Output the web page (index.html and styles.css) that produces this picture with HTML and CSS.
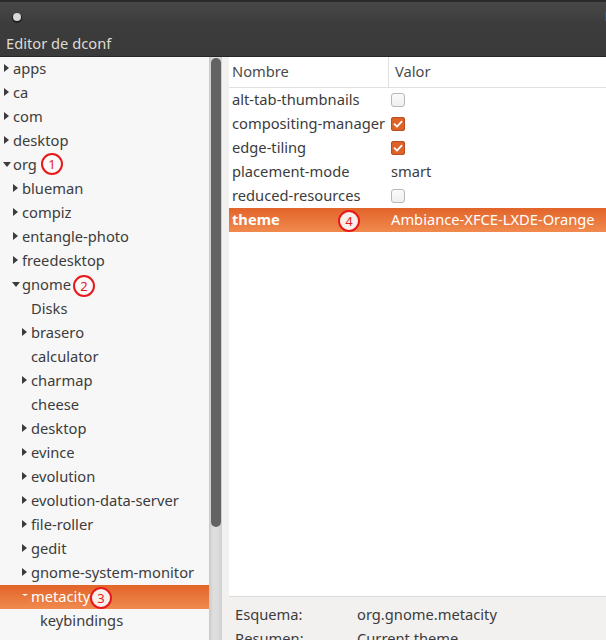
FILE: index.html
```
<!DOCTYPE html>
<html>
<head>
<meta charset="utf-8">
<link rel="stylesheet" href="styles.css">
</head>
<body>
<div class="window">
  <div class="titlebar">
    <div class="tb-top">
      <span class="tb-dot"></span>
      <span class="tb-cut">E</span>
    </div>
    <div class="tb-title">Editor de dconf</div>
  </div>
  <div class="main">
    <div class="tree">
      <div class="row l0"><span class="tri r"></span>apps</div>
      <div class="row l0"><span class="tri r"></span>ca</div>
      <div class="row l0"><span class="tri r"></span>com</div>
      <div class="row l0"><span class="tri r"></span>desktop</div>
      <div class="row l0"><span class="tri d"></span>org<span class="mark m1">1</span></div>
      <div class="row l1"><span class="tri r"></span>blueman</div>
      <div class="row l1"><span class="tri r"></span>compiz</div>
      <div class="row l1"><span class="tri r"></span>entangle-photo</div>
      <div class="row l1"><span class="tri r"></span>freedesktop</div>
      <div class="row l1"><span class="tri d"></span>gnome<span class="mark m2">2</span></div>
      <div class="row l2"><span class="tri n"></span>Disks</div>
      <div class="row l2"><span class="tri r"></span>brasero</div>
      <div class="row l2"><span class="tri n"></span>calculator</div>
      <div class="row l2"><span class="tri r"></span>charmap</div>
      <div class="row l2"><span class="tri n"></span>cheese</div>
      <div class="row l2"><span class="tri r"></span>desktop</div>
      <div class="row l2"><span class="tri r"></span>evince</div>
      <div class="row l2"><span class="tri r"></span>evolution</div>
      <div class="row l2"><span class="tri r"></span>evolution-data-server</div>
      <div class="row l2"><span class="tri r"></span>file-roller</div>
      <div class="row l2"><span class="tri r"></span>gedit</div>
      <div class="row l2"><span class="tri r"></span>gnome-system-monitor</div>
      <div class="row l2 sel"><span class="tri d small"></span>metacity<span class="mark m3">3</span></div>
      <div class="row l3"><span class="tri n"></span>keybindings</div>
    </div>
    <div class="scrollbar"><div class="thumb"></div></div>
    <div class="pane-sep"></div>
    <div class="right">
      <div class="list">
        <div class="head">
          <div class="hcell hname">Nombre</div>
          <div class="hcell hval">Valor</div>
        </div>
        <div class="krow"><div class="kname">alt-tab-thumbnails</div><div class="kval"><span class="cb"></span></div></div>
        <div class="krow"><div class="kname">compositing-manager</div><div class="kval"><span class="cb on"><svg viewBox="0 0 14 14" width="14" height="14"><path d="M3.5 7.2 L6 9.6 L10.6 4.6" fill="none" stroke="#fff" stroke-width="1.8" stroke-linecap="round" stroke-linejoin="round"/></svg></span></div></div>
        <div class="krow"><div class="kname">edge-tiling</div><div class="kval"><span class="cb on"><svg viewBox="0 0 14 14" width="14" height="14"><path d="M3.5 7.2 L6 9.6 L10.6 4.6" fill="none" stroke="#fff" stroke-width="1.8" stroke-linecap="round" stroke-linejoin="round"/></svg></span></div></div>
        <div class="krow"><div class="kname">placement-mode</div><div class="kval">smart</div></div>
        <div class="krow"><div class="kname">reduced-resources</div><div class="kval"><span class="cb"></span></div></div>
        <div class="krow ksel"><div class="kname bold">theme</div><div class="kval">Ambiance-XFCE-LXDE-Orange</div><span class="mark m4">4</span></div>
      </div>
      <div class="details">
        <div class="drow"><span class="dlabel">Esquema:</span><span>org.gnome.metacity</span></div>
        <div class="drow"><span class="dlabel">Resumen:</span><span>Current theme</span></div>
      </div>
    </div>
  </div>
</div>
</body>
</html>
```
FILE: styles.css
```
html, body {
  margin: 0;
  padding: 0;
}
body {
  width: 606px;
  height: 640px;
  overflow: hidden;
  background: #f2f1f0;
  font-family: "Noto Sans", "Open Sans", sans-serif;
  font-size: 14.7px;
  color: #3c3c3c;
}
.window {
  display: flex;
  flex-direction: column;
  height: 640px;
  border-top: 2px solid #2c2a2c;
}
.titlebar {
  height: 54px;
  background: linear-gradient(#484848, #3c3c3c 40%, #3a3a3a);
  border-bottom: 1px solid #262626;
  display: flex;
  flex-direction: column;
}
.tb-top {
  height: 28px;
  display: flex;
  align-items: center;
  justify-content: space-between;
}
.tb-dot {
  width: 8px;
  height: 8px;
  border-radius: 50%;
  background: #d8d8d8;
  box-shadow: 0 1px 0 1px #1e1e1e;
  margin-left: 13px;
  margin-top: 1px;
}
.tb-cut {
  color: #dfdbd2;
  font-size: 13px;
  margin-right: -6px;
}
.tb-title {
  color: #dfdbd2;
  font-size: 14.7px;
  padding-left: 6px;
  line-height: 20px;
  margin-top: 3px;
}
.main {
  flex: 1;
  display: flex;
  min-height: 0;
}
.tree {
  width: 209px;
  background: #f7f7f7;
  overflow: hidden;
  flex: none;
}
.row {
  box-sizing: border-box;
  height: 24px;
  line-height: 22px;
  padding-bottom: 2px;
  display: flex;
  align-items: center;
  white-space: nowrap;
  position: relative;
}
.row.l0 { padding-left: 3px; }
.row.l1 { padding-left: 12px; }
.row.l2 { padding-left: 21px; }
.row.l3 { padding-left: 30px; }
.tri {
  width: 10px;
  height: 10px;
  flex: none;
  position: relative;
}
.tri.r::before {
  content: "";
  position: absolute;
  left: 1px;
  top: 1px;
  border-left: 5px solid #3c3c3c;
  border-top: 4px solid transparent;
  border-bottom: 4px solid transparent;
}
.tri.d::before {
  content: "";
  position: absolute;
  left: 0;
  top: 3px;
  border-top: 5px solid #3c3c3c;
  border-left: 4px solid transparent;
  border-right: 4px solid transparent;
}
.tri.d.small::before {
  left: 1px;
  top: 3px;
  border-top: 2px solid #fff;
  border-left: 3px solid transparent;
  border-right: 3px solid transparent;
}
.row.sel {
  background: linear-gradient(#e2642a, #f08a4e);
  color: #fff;
}
.mark {
  position: absolute;
  width: 18px;
  height: 18px;
  border: 2px solid #e8191b;
  border-radius: 50%;
  background: rgba(250, 250, 250, 0.92);
  color: #e8191b;
  font-size: 13px;
  line-height: 18px;
  text-align: center;
  top: 1px;
}
.m1 { left: 41px; top: 0; }
.m2 { left: 73px; top: 2px; }
.m3 { left: 90px; top: 2px; }
.m4 { left: 109px; top: 2px; }
.scrollbar {
  width: 13px;
  flex: none;
  background: linear-gradient(90deg, #c8c8c8, #dedede 30%, #dcdcdc 70%, #cfcfcf);
  padding-top: 1px;
}
.thumb {
  margin-left: 2px;
  width: 10px;
  height: 469px;
  border-radius: 5px;
  background: #626262;
}
.pane-sep {
  width: 7px;
  flex: none;
  background: #f2f1f0;
}
.right {
  flex: 1;
  display: flex;
  flex-direction: column;
  min-width: 0;
}
.list {
  height: 539px;
  background: #fff;
  border-bottom: 1px solid #dadada;
  flex: none;
}
.head {
  height: 30px;
  display: flex;
  border-bottom: 1px solid #e0e0e0;
  color: #4a4a4a;
}
.hcell {
  line-height: 29px;
}
.hname {
  width: 156px;
  padding-left: 3px;
  border-right: 1px solid #e0e0e0;
}
.hval {
  padding-left: 6px;
}
.krow {
  box-sizing: border-box;
  height: 24px;
  padding-bottom: 2px;
  display: flex;
  align-items: center;
  position: relative;
  white-space: nowrap;
}
.kname {
  width: 159px;
  padding-left: 3px;
  flex: none;
}
.kval {
  display: flex;
  align-items: center;
}
.kname.bold {
  font-weight: bold;
}
.krow.ksel {
  background: linear-gradient(#e2642a, #f08a4e);
  color: #fff;
}
.cb {
  width: 12px;
  height: 12px;
  border: 1px solid #b8b8b8;
  border-radius: 3px;
  background: linear-gradient(#fafafa, #efefef);
  display: block;
  margin-top: 2px;
}
.cb.on {
  width: 14px;
  height: 14px;
  border: none;
  background: #de6329;
  box-shadow: inset 0 0 0 1px #b84e1d;
}
.cb svg {
  display: block;
}
.details {
  padding-left: 6px;
  padding-top: 5px;
}
.drow {
  height: 24px;
  line-height: 24px;
  display: flex;
  white-space: nowrap;
}
.dlabel {
  width: 122px;
  flex: none;
}
```
